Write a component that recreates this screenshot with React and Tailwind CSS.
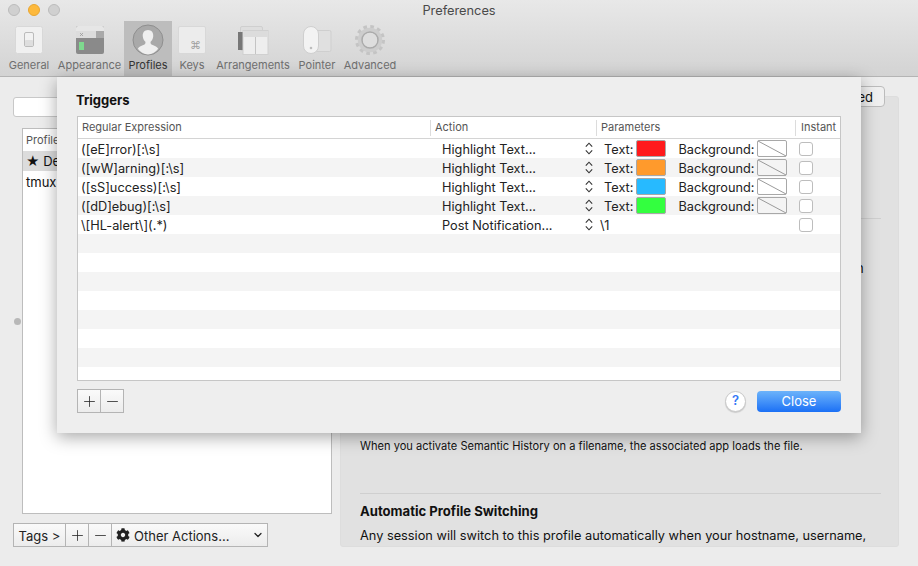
import React from 'react'
import { FaCog } from 'react-icons/fa'
import { LuChevronDown, LuMinus, LuPlus } from 'react-icons/lu'

const font = { fontFamily: '"Inter", "Liberation Sans", sans-serif' }

const GeneralIcon = () => (
  <svg width="30" height="30" viewBox="0 0 30 30">
    <rect x="1.5" y="1.5" width="27" height="27" rx="2" fill="#f0f0f0" stroke="#d8d8d8" />
    <rect x="10.5" y="7.5" width="9" height="14" rx="1.5" fill="#f2f2f2" stroke="#bbbbbb" />
    <rect x="11" y="15" width="8" height="6" rx="1" fill="#dedede" />
  </svg>
)

const AppearanceIcon = () => (
  <svg width="30" height="30" viewBox="0 0 30 30">
    <rect x="1" y="1" width="28" height="28" rx="2" fill="#8a8a8a" />
    <path d="M1 3a2 2 0 0 1 2-2h24a2 2 0 0 1 2 2v3H1z" fill="#e6e6e6" />
    <rect x="1" y="6" width="28" height="7" fill="#dcdcdc" />
    <rect x="21" y="6" width="8" height="7" fill="#a9a9a9" />
    <path d="M5 8l3 3M8 8l-3 3" stroke="#9a9a9a" strokeWidth="0.8" />
    <rect x="4" y="17" width="5" height="8" fill="#7ed98e" />
  </svg>
)

const ProfileIcon = () => (
  <svg width="32" height="32" viewBox="0 0 32 32">
    <circle cx="16" cy="16" r="15" fill="#a9a9a9" stroke="#8f8f8f" />
    <path d="M16 6c-3.6 0-5.6 2.8-5.2 6.4.2 2.2 1.2 4.2 2.6 5.4.3 1.6-.2 2.6-2 3.3-2.5 1-4.6 1.7-5.6 3.6A15 15 0 0 0 16 30.6a15 15 0 0 0 10.2-5.9c-1-1.9-3.1-2.6-5.6-3.6-1.8-.7-2.3-1.7-2-3.3 1.4-1.2 2.4-3.2 2.6-5.4C21.6 8.8 19.6 6 16 6z" fill="#efefef" />
  </svg>
)

const KeysIcon = () => (
  <div className="relative w-[28px] h-[28px] rounded-[2px] bg-[#ececec] border border-[#d8d8d8] mx-auto">
    <span className="absolute right-[4px] bottom-[2px] text-[11px] leading-[12px] text-[#a0a0a0]">⌘</span>
  </div>
)

const ArrangementsIcon = () => (
  <svg width="32" height="30" viewBox="0 0 32 30">
    <rect x="3.5" y="1.5" width="22" height="24" rx="1.5" fill="#dedede" stroke="#cfcfcf" />
    <rect x="1" y="7" width="6" height="18" fill="#777777" />
    <rect x="6" y="5.5" width="25" height="24" fill="#eeeeee" stroke="#d0d0d0" />
    <rect x="6.5" y="6" width="24" height="6" fill="#dcdcdc" />
    <line x1="18.5" y1="12" x2="18.5" y2="29" stroke="#c4c4c4" />
  </svg>
)

const PointerIcon = () => (
  <svg width="30" height="30" viewBox="0 0 30 30">
    <rect x="12" y="5.5" width="17" height="21" rx="1.5" fill="#e0e0e0" stroke="#cfcfcf" />
    <rect x="1.5" y="1.5" width="15" height="27" rx="7.5" fill="#f3f3f3" stroke="#cfcfcf" />
    <circle cx="9" cy="23" r="1.3" fill="#bdbdbd" />
  </svg>
)

const GearIcon = () => (
  <svg width="32" height="32" viewBox="0 0 32 32">
    <circle cx="16" cy="16" r="13.2" fill="none" stroke="#c4c4c4" strokeWidth="3.6" strokeDasharray="3.6 3.3" />
    <circle cx="16" cy="16" r="10" fill="none" stroke="#cdcdcd" strokeWidth="4.5" />
    <circle cx="16" cy="16" r="8" fill="none" stroke="#ababab" strokeWidth="1.5" />
    <circle cx="16" cy="16" r="7" fill="#dedede" />
  </svg>
)

const tabs = [
  { label: 'General', icon: <GeneralIcon />, width: 'w-[52px]' },
  { label: 'Appearance', icon: <AppearanceIcon />, width: 'w-[69px]' },
  { label: 'Profiles', icon: <ProfileIcon />, width: 'w-[48px]', active: true },
  { label: 'Keys', icon: <KeysIcon />, width: 'w-[40px]' },
  { label: 'Arrangements', icon: <ArrangementsIcon />, width: 'w-[82px]' },
  { label: 'Pointer', icon: <PointerIcon />, width: 'w-[46px]' },
  { label: 'Advanced', icon: <GearIcon />, width: 'w-[60px]' },
]

const triggers = [
  { regex: '([eE]rror)[:\\s]', action: 'Highlight Text...', color: 'bg-[#ff1a1c]' },
  { regex: '([wW]arning)[:\\s]', action: 'Highlight Text...', color: 'bg-[#ff9a2c]' },
  { regex: '([sS]uccess)[:\\s]', action: 'Highlight Text...', color: 'bg-[#27baff]' },
  { regex: '([dD]ebug)[:\\s]', action: 'Highlight Text...', color: 'bg-[#33ff3f]' },
  { regex: '\\[HL-alert\\](.*)', action: 'Post Notification...', param: '\\1' },
]

const UpDown = () => (
  <svg width="8" height="13" viewBox="0 0 8 13" fill="none" stroke="#333" strokeWidth="1.1" className="block">
    <path d="M0.8 4.6L4 1.2l3.2 3.4M0.8 8.4L4 11.8l3.2-3.4" />
  </svg>
)

const EmptyWell = () => (
  <svg width="30" height="17" viewBox="0 0 30 17" className="block">
    <rect x="0.5" y="0.5" width="29" height="16" rx="1.5" fill="transparent" stroke="#a8a8a8" />
    <line x1="1" y1="1" x2="29" y2="16" stroke="#9a9a9a" />
  </svg>
)

const Checkbox = () => (
  <div className="mt-[1px] w-[14px] h-[14px] rounded-[3px] bg-white border border-[#bdbdbd]" />
)

const TriggerRow = ({ row, striped }) => (
  <div className={`grid grid-cols-[353px_166px_199px_1fr] h-[19px] items-center text-[12.75px] leading-[16px] text-[#222] ${striped ? 'bg-[#f4f4f4]' : 'bg-white'}`}>
    <div className="pl-[3px] pt-[3px] whitespace-nowrap">{row ? row.regex : ''}</div>
    <div className="flex items-center pl-[11px] pr-[4px] justify-between">
      {row && <span className="pt-[3px] whitespace-nowrap">{row.action}</span>}
      {row && <UpDown />}
    </div>
    <div className="flex items-center pl-[7px]">
      {row && row.color && (
        <>
          <span className="pt-[3px]">Text:</span>
          <div className={`ml-[3px] w-[30px] h-[17px] rounded-[2px] border border-[#a8a8a8] ${row.color}`} />
          <span className="ml-[12px] pt-[3px]">Background:</span>
          <div className="ml-[2px]">
            <EmptyWell />
          </div>
        </>
      )}
      {row && row.param && <span className="-ml-[4px] pt-[3px]">{row.param}</span>}
    </div>
    <div className="pl-[3px]">{row && <Checkbox />}</div>
  </div>
)

const TriggersSheet = () => (
  <div className="absolute z-20 left-[57px] top-[77px] w-[804px] h-[356px] bg-[#eeeeee] shadow-[0_4px_16px_rgba(0,0,0,0.35)] px-[20px]">
    <div className="-ml-[1px] h-[39px] pt-[15px] text-[13px] leading-[16px] font-bold text-[#111]">Triggers</div>
    <div className="w-[764px] border border-[#c6c6c6] bg-white">
      <div className="grid grid-cols-[353px_166px_199px_1fr] h-[22px] items-center text-[11px] text-[#555] border-b border-[#d4d4d4]">
        <div className="pl-[4px] h-[16px] leading-[14px] border-r border-[#dcdcdc]">Regular Expression</div>
        <div className="pl-[4px] h-[16px] leading-[14px] border-r border-[#dcdcdc]">Action</div>
        <div className="pl-[4px] h-[16px] leading-[14px] border-r border-[#dcdcdc]">Parameters</div>
        <div className="pl-[5px] h-[16px] leading-[14px]">Instant</div>
      </div>
      {Array.from({ length: 12 }).map((_, i) => (
        <TriggerRow key={i} row={triggers[i]} striped={i % 2 === 1} />
      ))}
      <div className="h-[13px] bg-white" />
    </div>
    <div className="flex items-center justify-between mt-[8px]">
      <div className="flex h-[24px] w-[47px] border border-[#b4b4b4] bg-gradient-to-b from-[#fafafa] to-[#ececec] text-[#222]">
        <div className="flex-1 flex items-center justify-center border-r border-[#b4b4b4]"><LuPlus size={17} strokeWidth={1.1} /></div>
        <div className="flex-1 flex items-center justify-center"><LuMinus size={17} strokeWidth={1.1} /></div>
      </div>
      <div className="flex items-center gap-[11px]">
        <div className="w-[21px] h-[21px] rounded-full bg-white border border-[#c8c8c8] shadow-[0_1px_1px_rgba(0,0,0,0.15)] flex items-center justify-center text-[13px] font-semibold text-[#3478f6]">?</div>
        <div className="w-[84px] h-[21px] pt-[2px] rounded-[4px] bg-gradient-to-b from-[#6cb3fa] to-[#1a6ff5] text-white text-[13px] flex items-center justify-center">Close</div>
      </div>
    </div>
  </div>
)

const App = () => (
  <div className="relative w-[918px] h-[566px] overflow-hidden bg-[#ececec] text-[#111]" style={font}>
    {/* title bar and toolbar */}
    <div className="h-[77px] bg-gradient-to-b from-[#e8e8e8] to-[#d3d3d3] border-b border-[#b4b4b4]">
      <div className="relative h-[21px] flex items-center justify-center text-[12.8px] text-[#4a4a4a]">
        <div className="absolute left-[8px] top-[4px] flex gap-[8px]">
          <div className="w-[12px] h-[12px] rounded-full bg-[#d0d0d0] border border-[#bcbcbc]" />
          <div className="w-[12px] h-[12px] rounded-full bg-[#fdb93c] border border-[#e8a631]" />
          <div className="w-[12px] h-[12px] rounded-full bg-[#d0d0d0] border border-[#bcbcbc]" />
        </div>
        Preferences
      </div>
      <div className="flex pl-[3px] text-[11px] text-[#6f6f6f]">
        {tabs.map((t) => (
          <div key={t.label} className={`${t.width} h-[55px] flex flex-col items-center ${t.active ? 'bg-[#bdbdbd] text-[#333]' : ''}`}>
            <div className="h-[37px] flex items-center justify-center">{t.icon}</div>
            <div className="leading-[14px] whitespace-nowrap">{t.label}</div>
          </div>
        ))}
      </div>
    </div>

    {/* preferences content behind the sheet */}
    <div className="flex h-[489px]">
      <div className="w-[340px] shrink-0 pl-[13px] pt-[20px]">
        <div className="w-[100px] h-[20px] rounded-[3px] bg-white border border-[#c8c8c8]" />
        <div className="flex mt-[11px]">
          <div className="w-[9px] flex items-center justify-end pr-[1px]">
            <div className="w-[7px] h-[7px] rounded-full bg-[#b8b8b8]" />
          </div>
          <div className="w-[310px] h-[386px] bg-white border border-[#bdbdbd]">
            <div className="h-[22px] pl-[3px] text-[11px] leading-[22px] text-[#555]">Profile</div>
            <div className="h-[20px] pl-[3px] text-[13px] leading-[20px] bg-[#dcdcdc]">★ Default</div>
            <div className="h-[20px] pl-[3px] pt-[1px] text-[13px] leading-[20px]">tmux</div>
          </div>
        </div>
        <div className="flex mt-[9px] w-[255px] h-[24px] border border-[#b4b4b4] bg-gradient-to-b from-[#fafafa] to-[#ececec] text-[13px] text-[#222]">
          <div className="w-[52px] pt-[3px] flex items-center justify-center border-r border-[#b4b4b4]">Tags &gt;</div>
          <div className="w-[23px] flex items-center justify-center border-r border-[#b4b4b4]"><LuPlus size={17} strokeWidth={1.1} /></div>
          <div className="w-[23px] flex items-center justify-center border-r border-[#b4b4b4]"><LuMinus size={17} strokeWidth={1.1} /></div>
          <div className="flex-1 flex items-center pl-[4px] pr-[3px]">
            <FaCog size={14} className="text-[#222]" />
            <span className="ml-[4px] pt-[3px] whitespace-nowrap">Other Actions...</span>
            <LuChevronDown size={12} strokeWidth={2.5} className="ml-auto" />
          </div>
        </div>
      </div>
      <div className="w-[578px] shrink-0 flex flex-col">
        <div className="relative z-10 self-end mr-[33px] mt-[9px] w-[100px] h-[21px] rounded-[4px] bg-[#f0f0f0] border border-[#bcbcbc] text-[13px] leading-[20px] text-right pr-[11px] -mb-[11px]">Advanced</div>
        <div className="w-[559px] h-[451px] rounded-[3px] bg-[#e1e1e1] border border-[#dddddd] pl-[19px] pr-[17px]">
          <div className="h-[121px]" />
          <div className="h-px bg-[#cfcfcf]" />
          <div className="h-[57px] flex items-end pl-[496px] text-[13px] leading-[16px]">n</div>
          <div className="h-[162px]" />
          <div className="text-[11.1px] leading-[16px] whitespace-nowrap">When you activate Semantic History on a filename, the associated app loads the file.</div>
          <div className="h-[39px]" />
          <div className="h-px bg-[#cfcfcf]" />
          <div className="mt-[9px] text-[13.1px] leading-[16px] font-bold">Automatic Profile Switching</div>
          <div className="mt-[9px] text-[12.77px] leading-[16px] whitespace-nowrap">Any session will switch to this profile automatically when your hostname, username,</div>
        </div>
      </div>
    </div>

    <TriggersSheet />
  </div>
)

export default App
